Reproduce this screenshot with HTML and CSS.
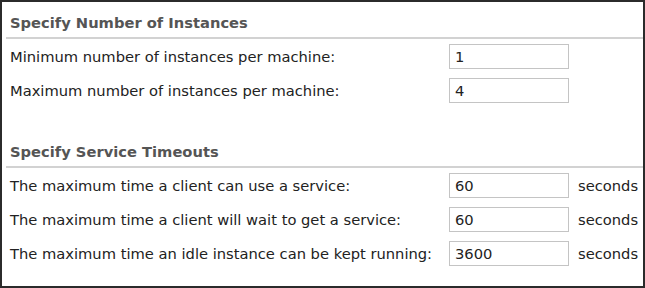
FILE: index.html
```html
<!DOCTYPE html>
<html lang="en">
  <head>
    <meta charset="utf-8">
    <link rel="stylesheet" href="styles.css">
  </head>
  <body>
    <div class="panel">
      <h3 class="section-title">Specify Number of Instances</h3>
      <div class="rows">
        <label class="field-label">Minimum number of instances per machine:</label>
        <input class="field" type="text" value="1">
        <span class="unit"></span>
        <label class="field-label">Maximum number of instances per machine:</label>
        <input class="field" type="text" value="4">
        <span class="unit"></span>
      </div>

      <h3 class="section-title second">Specify Service Timeouts</h3>
      <div class="rows">
        <label class="field-label">The maximum time a client can use a service:</label>
        <input class="field" type="text" value="60">
        <span class="unit">seconds</span>
        <label class="field-label">The maximum time a client will wait to get a service:</label>
        <input class="field" type="text" value="60">
        <span class="unit">seconds</span>
        <label class="field-label">The maximum time an idle instance can be kept running:</label>
        <input class="field" type="text" value="3600">
        <span class="unit">seconds</span>
      </div>
    </div>
  </body>
</html>
```

FILE: styles.css
```css
body {
  margin: 0;
  background: #fff;
}
.panel {
  box-sizing: border-box;
  width: 645px;
  height: 288px;
  border: 2px solid #2b2b2b;
  padding: 0 0 0 4px;
  font-family: 'DejaVu Sans', Verdana, sans-serif;
  font-size: 14.7px;
  color: #222;
}
.section-title {
  margin: 0;
  padding: 12px 0 0 4px;
  height: 23px;
  font-size: 14.7px;
  font-weight: bold;
  color: #555;
  border-bottom: 2px solid #d2d2d2;
}
.section-title.second {
  margin-top: 28px;
}
.rows {
  display: grid;
  grid-template-columns: 439px 120px auto;
  grid-auto-rows: 25px;
  row-gap: 9px;
  align-items: center;
  padding: 5px 0 0 4px;
}
.field-label {
  white-space: nowrap;
}
.field {
  box-sizing: border-box;
  width: 120px;
  height: 25px;
  margin: 0;
  padding: 0 5px;
  border: 1px solid #c4c4c4;
  font-family: 'DejaVu Sans', Verdana, sans-serif;
  font-size: 14.7px;
  color: #222;
}
.unit {
  padding-left: 9px;
}
```
